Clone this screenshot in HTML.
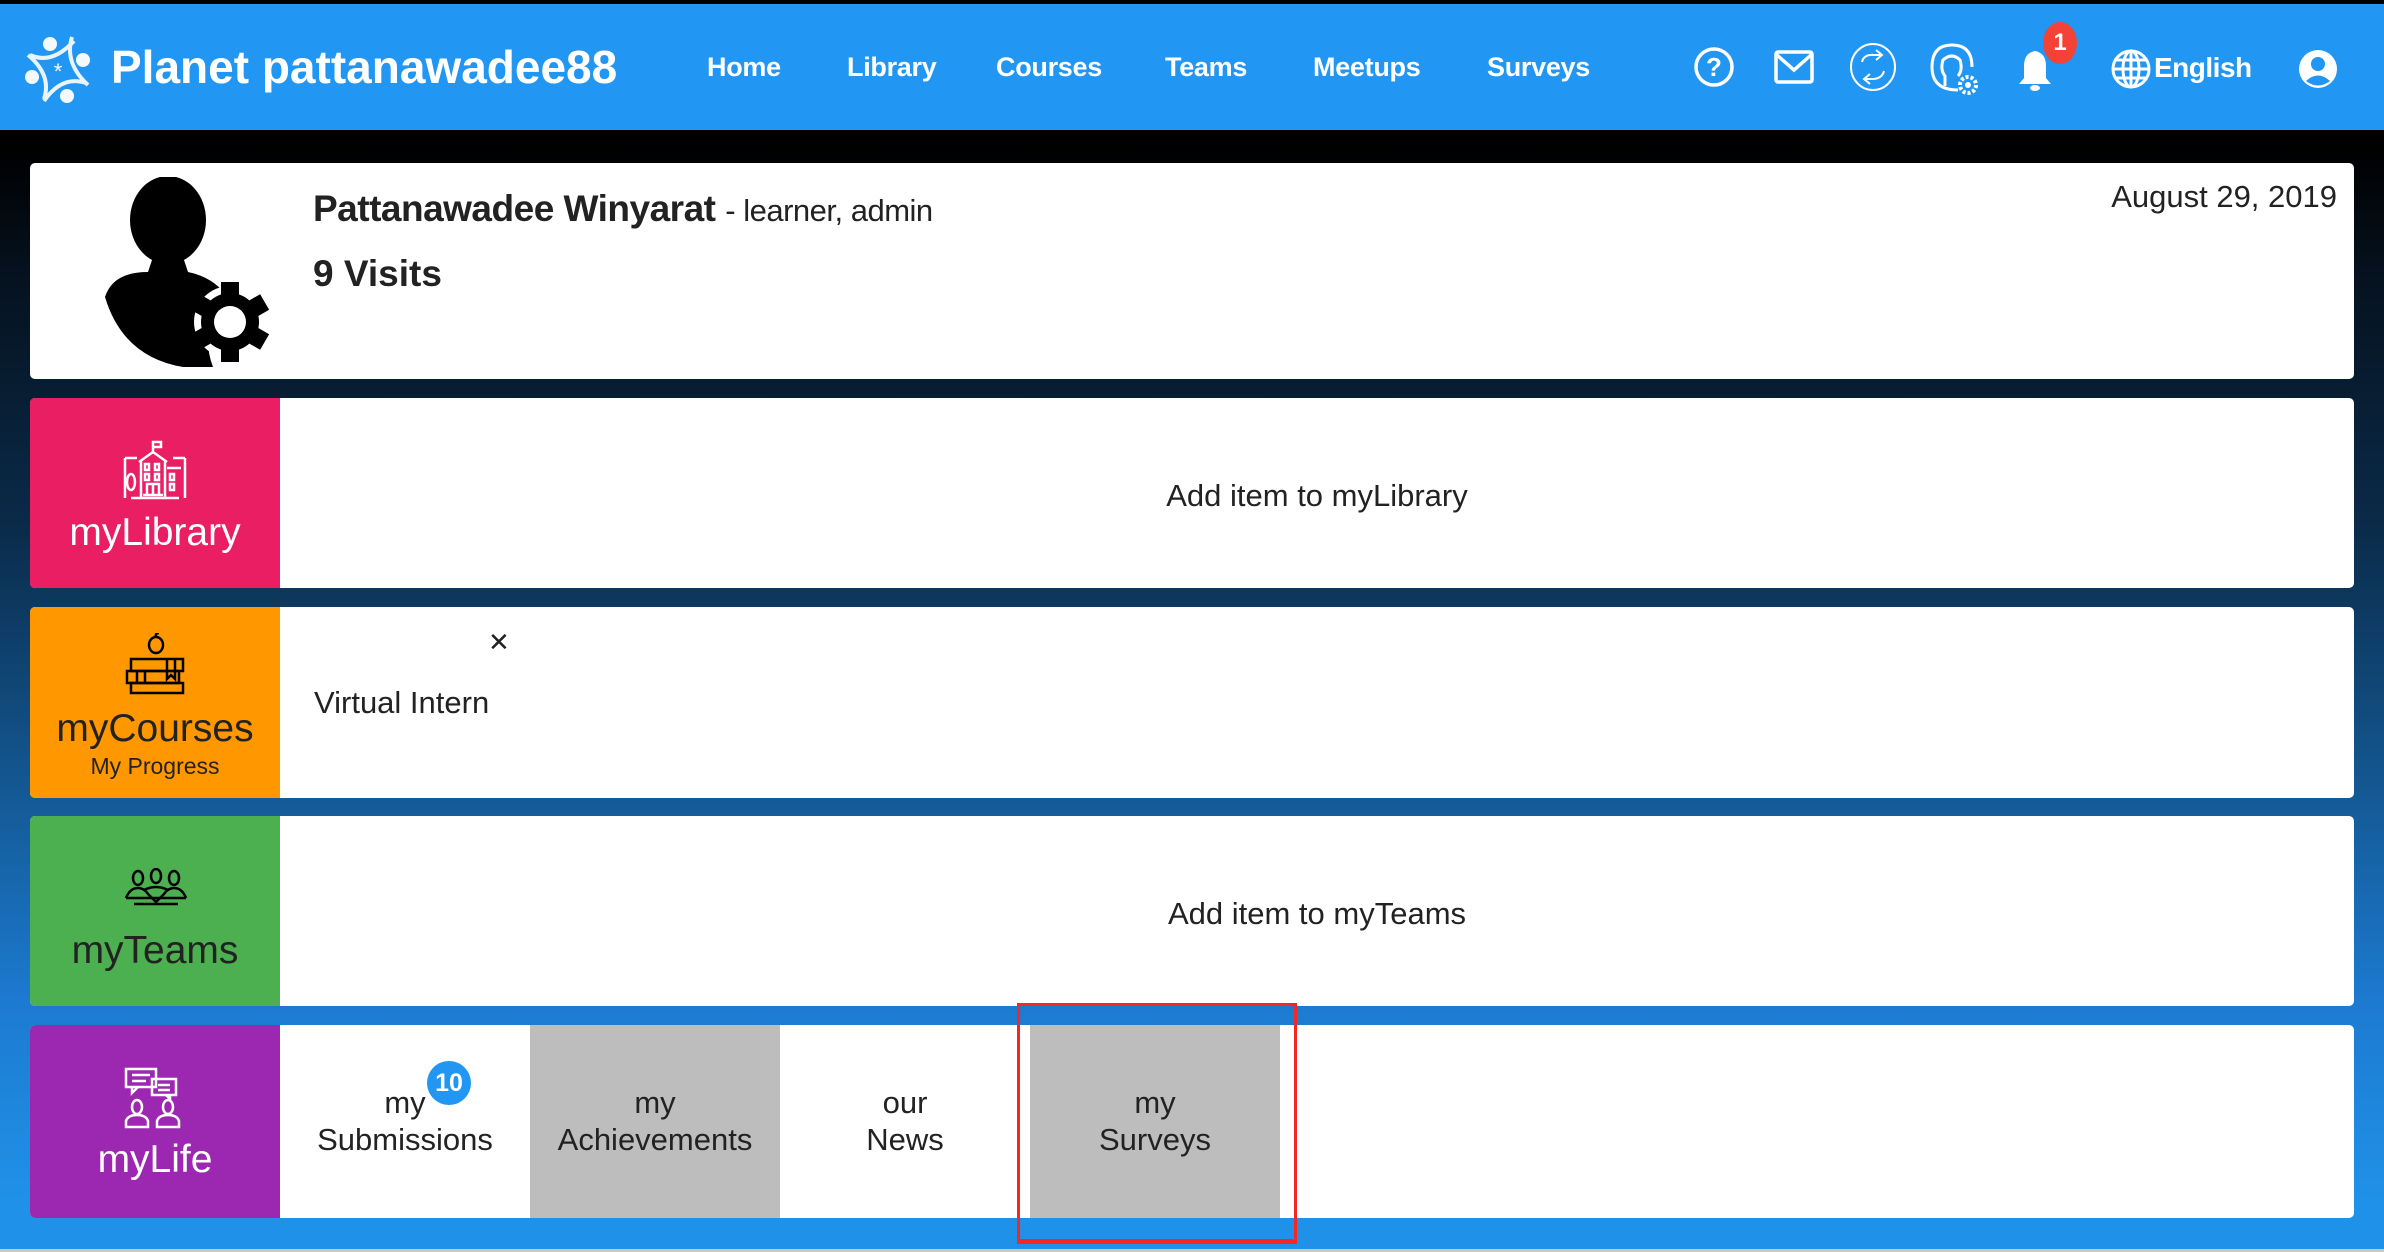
<!DOCTYPE html>
<html><head><meta charset="utf-8">
<style>
*{margin:0;padding:0;box-sizing:border-box}
body{width:2384px;height:1252px;overflow:hidden;font-family:"Liberation Sans",sans-serif;position:relative;background:#c8c8c8}
.bg{position:absolute;left:0;top:0;width:2384px;height:1249px;background:linear-gradient(to bottom,#000 0px,#000 150px,#05101c 260px,#0a2a48 520px,#145a96 800px,#1c7ad0 1000px,#2091e8 1200px,#2091e8 1249px)}
.hdr{position:absolute;left:0;top:4px;width:2384px;height:126px;background:#2196f3;color:#fff}
.t{position:absolute;white-space:nowrap}
.nav{font-size:27px;font-weight:bold;top:48px;color:#fff;letter-spacing:-0.3px}
.card{position:absolute;left:30px;width:2324px;background:#fff;border-radius:5px;overflow:hidden}
.tile{position:absolute;left:0;top:0;width:250px;height:100%;color:#fff;text-align:center}
.lbl{position:absolute;left:0;width:250px;text-align:center;font-size:39px}
.mid{position:absolute;left:250px;right:0;text-align:center;font-size:31px;color:#222}
.sub{position:absolute;top:0;width:250px;height:100%;text-align:center;font-size:31px;color:#222;line-height:37px;padding-top:59px}
</style></head><body>
<div class="bg"></div>
<div class="hdr">
<svg style="position:absolute;left:22px;top:29px" width="72" height="72" viewBox="0 0 72 72">
<g fill="#fff" opacity="0.95">
<circle cx="28" cy="11" r="7"/><circle cx="61" cy="27" r="7"/><circle cx="45" cy="63" r="7"/><circle cx="10" cy="44" r="7"/>
</g>
<g fill="none" stroke="#fff" stroke-width="4" opacity="0.9">
<path d="M8 22 Q30 32 52 8"/><path d="M50 4 Q42 30 66 52"/><path d="M64 50 Q40 42 22 68"/><path d="M22 66 Q30 42 6 22"/>
</g>
<text x="36" y="46" fill="#fff" font-size="22" text-anchor="middle" font-family="Liberation Sans">*</text>
</svg>
<div class="t" style="left:111px;top:36px;font-size:46px;font-weight:bold">Planet pattanawadee88</div>
<div class="t nav" style="left:707px">Home</div>
<div class="t nav" style="left:847px">Library</div>
<div class="t nav" style="left:996px">Courses</div>
<div class="t nav" style="left:1165px">Teams</div>
<div class="t nav" style="left:1313px">Meetups</div>
<div class="t nav" style="left:1487px">Surveys</div>
<svg style="position:absolute;left:1693px;top:42px" width="42" height="42" viewBox="0 0 42 42"><circle cx="21" cy="21" r="18" fill="none" stroke="#fff" stroke-width="3.5"/><text x="21" y="30" fill="#fff" font-size="26" font-weight="bold" text-anchor="middle" font-family="Liberation Sans">?</text></svg>
<svg style="position:absolute;left:1774px;top:46px" width="40" height="34" viewBox="0 0 40 34"><rect x="2" y="2" width="36" height="30" rx="2" fill="none" stroke="#fff" stroke-width="3.5"/><path d="M3 5 L20 20 L37 5" fill="none" stroke="#fff" stroke-width="3.5"/></svg>
<svg style="position:absolute;left:1848px;top:38px" width="50" height="50" viewBox="0 0 50 50"><ellipse cx="25" cy="25" rx="22" ry="23" fill="none" stroke="#fff" stroke-width="2"/><path d="M14 20 Q16 12 26 13 L33 13 M28 8 L34 13 L28 18 M36 29 Q34 37 24 37 L17 37 M22 32 L16 37 L22 42" fill="none" stroke="#fff" stroke-width="2"/></svg>
<svg style="position:absolute;left:1928px;top:38px" width="52" height="54" viewBox="0 0 52 54"><path d="M30 48 Q4 48 4 25 Q4 3 24 3 Q44 3 44 25" fill="none" stroke="#fff" stroke-width="3"/><path d="M17 44 L17 34 Q12 28 15 18 Q24 10 32 18 Q35 28 30 34" fill="none" stroke="#fff" stroke-width="3"/><circle cx="40" cy="43" r="8" fill="none" stroke="#fff" stroke-width="4" stroke-dasharray="3 2"/><circle cx="40" cy="43" r="3" fill="#fff"/></svg>
<svg style="position:absolute;left:2016px;top:44px" width="38" height="44" viewBox="0 0 38 44"><path d="M19 3 Q8 5 8 18 L8 30 L3 36 L35 36 L30 30 L30 18 Q30 5 19 3Z" fill="#fff"/><ellipse cx="19" cy="40" rx="5" ry="3" fill="#fff"/></svg>
<div style="position:absolute;left:2043px;top:18px;width:34px;height:42px;border-radius:50%;background:#f44336;color:#fff;font-size:24px;font-weight:bold;text-align:center;line-height:42px">1</div>
<svg style="position:absolute;left:2110px;top:44px" width="42" height="42" viewBox="0 0 42 42"><g fill="none" stroke="#fff" stroke-width="3"><circle cx="21" cy="21" r="18"/><ellipse cx="21" cy="21" rx="8" ry="18"/><path d="M3 21 H39 M6 12 H36 M6 30 H36 M21 3 V39"/></g></svg>
<div class="t" style="left:2154px;top:48px;font-size:28px;font-weight:bold;letter-spacing:-0.5px">English</div>
<svg style="position:absolute;left:2298px;top:44px" width="40" height="42" viewBox="0 0 40 42"><circle cx="20" cy="21" r="19" fill="#fff"/><circle cx="20" cy="16" r="7" fill="#2196f3"/><path d="M8 33 Q20 22 32 33 Q20 42 8 33Z" fill="#2196f3"/></svg>
</div>

<div class="card" style="top:163px;height:216px">
<svg style="position:absolute;left:73px;top:14px" width="170" height="190" viewBox="0 0 170 190">
<ellipse cx="65" cy="43" rx="38" ry="44" fill="#000"/>
<path d="M50 80 L80 80 L85 95 Q110 100 125 120 Q95 150 110 190 L80 190 Q20 180 2 120 Q10 95 45 95Z" fill="#000"/>
<g transform="translate(127,145)"><circle r="36" fill="#fff"/>
<g fill="#000"><rect x="-9" y="-40" width="18" height="80"/><rect x="-9" y="-40" width="18" height="80" transform="rotate(60)"/><rect x="-9" y="-40" width="18" height="80" transform="rotate(120)"/></g>
<circle r="29" fill="#000"/><circle r="16" fill="#fff"/></g>
</svg>
<div class="t" style="left:283px;top:25px;font-size:37px;color:#222;font-weight:bold;letter-spacing:-0.5px">Pattanawadee Winyarat <span style="font-size:31px;font-weight:normal">- learner, admin</span></div>
<div class="t" style="left:283px;top:90px;font-size:37px;color:#222;font-weight:bold">9 Visits</div>
<div class="t" style="right:17px;top:16px;font-size:31px;color:#222">August 29, 2019</div>
</div>

<div class="card" style="top:398px;height:190px">
<div class="tile" style="background:#e91e63">
<svg style="position:absolute;left:93px;top:42px" width="64" height="62" viewBox="0 0 64 62"><g fill="none" stroke="#fff" stroke-width="2.5"><path d="M30 12 V2 H38 V7 H30"/><path d="M16 22 L30 12 L44 22 M18 20 V58 M42 20 V58 M2 18 V58 M62 18 V58 M2 18 H14 M50 18 H62 M8 58 H56 M20 55 H40 M24 55 V44 H36 V55 M30 44 V55 M44 28 H58"/><rect x="22" y="24" width="4" height="6"/><rect x="32" y="24" width="4" height="6"/><rect x="22" y="34" width="4" height="6"/><rect x="32" y="34" width="4" height="6"/><rect x="47" y="34" width="4" height="6"/><rect x="47" y="44" width="4" height="6"/><ellipse cx="8" cy="42" rx="4" ry="8"/></g></svg>
<div class="lbl" style="top:113px">myLibrary</div></div>
<div class="mid" style="top:80px">Add item to myLibrary</div>
</div>

<div class="card" style="top:607px;height:191px">
<div class="tile" style="background:#ff9800">
<svg style="position:absolute;left:95px;top:26px" width="62" height="62" viewBox="0 0 62 62"><g fill="none" stroke="#000" stroke-width="2.5"><ellipse cx="31" cy="12" rx="7" ry="8"/><path d="M31 4 Q30 0 34 0"/><rect x="6" y="26" width="52" height="12"/><rect x="2" y="38" width="52" height="12"/><rect x="6" y="50" width="52" height="10"/><path d="M12 38 V50 M20 38 V50 M50 26 V46 L46 42 L42 46 V26"/></g></svg>
<div class="lbl" style="top:100px;color:#222">myCourses</div>
<div class="lbl" style="top:146px;color:#222;font-size:23px">My Progress</div></div>
<div class="t" style="left:458px;top:20px;font-size:26px;color:#222">✕</div>
<div class="t" style="left:284px;top:78px;font-size:31px;color:#222">Virtual Intern</div>
</div>

<div class="card" style="top:816px;height:190px">
<div class="tile" style="background:#4caf50">
<svg style="position:absolute;left:94px;top:52px" width="64" height="40" viewBox="0 0 64 40"><g fill="none" stroke="#000" stroke-width="2.5"><ellipse cx="14" cy="10" rx="5" ry="7"/><ellipse cx="32" cy="8" rx="5" ry="7"/><ellipse cx="50" cy="10" rx="5" ry="7"/><path d="M2 30 Q6 20 14 20 Q20 20 24 26 M24 26 L32 34 L40 26 Q44 20 50 20 Q58 20 62 30 M20 22 Q32 16 44 22 M2 30 H62 M10 36 H54"/></g></svg>
<div class="lbl" style="top:113px;color:#222">myTeams</div></div>
<div class="mid" style="top:80px">Add item to myTeams</div>
</div>

<div class="card" style="top:1025px;height:193px">
<div class="tile" style="background:#9c27b0">
<svg style="position:absolute;left:94px;top:42px" width="64" height="62" viewBox="0 0 64 62"><g fill="none" stroke="#fff" stroke-width="2.5"><rect x="2" y="2" width="30" height="18"/><path d="M8 20 V26 L14 20 M8 8 H26 M8 14 H22"/><rect x="28" y="12" width="24" height="16"/><path d="M46 28 V32 L42 28 M34 18 H46 M34 23 H46"/><ellipse cx="13" cy="40" rx="5" ry="7"/><ellipse cx="44" cy="40" rx="5" ry="7"/><path d="M2 60 V54 Q4 48 13 48 Q22 48 24 54 V60 Z M33 60 V54 Q35 48 44 48 Q53 48 55 54 V60 Z"/></g></svg>
<div class="lbl" style="top:113px">myLife</div></div>
<div class="sub" style="left:250px;background:#fff">my<br>Submissions</div>
<div style="position:absolute;left:397px;top:36px;width:44px;height:44px;border-radius:50%;background:#2196f3;color:#fff;font-size:25px;font-weight:bold;text-align:center;line-height:44px">10</div>
<div class="sub" style="left:500px;background:#bdbdbd">my<br>Achievements</div>
<div class="sub" style="left:750px;background:#fff">our<br>News</div>
<div class="sub" style="left:1000px;background:#bdbdbd">my<br>Surveys</div>
</div>

<div style="position:absolute;left:1017px;top:1003px;width:280px;height:241px;border:3px solid #f4281e;border-bottom-width:5px"></div>
</body></html>
